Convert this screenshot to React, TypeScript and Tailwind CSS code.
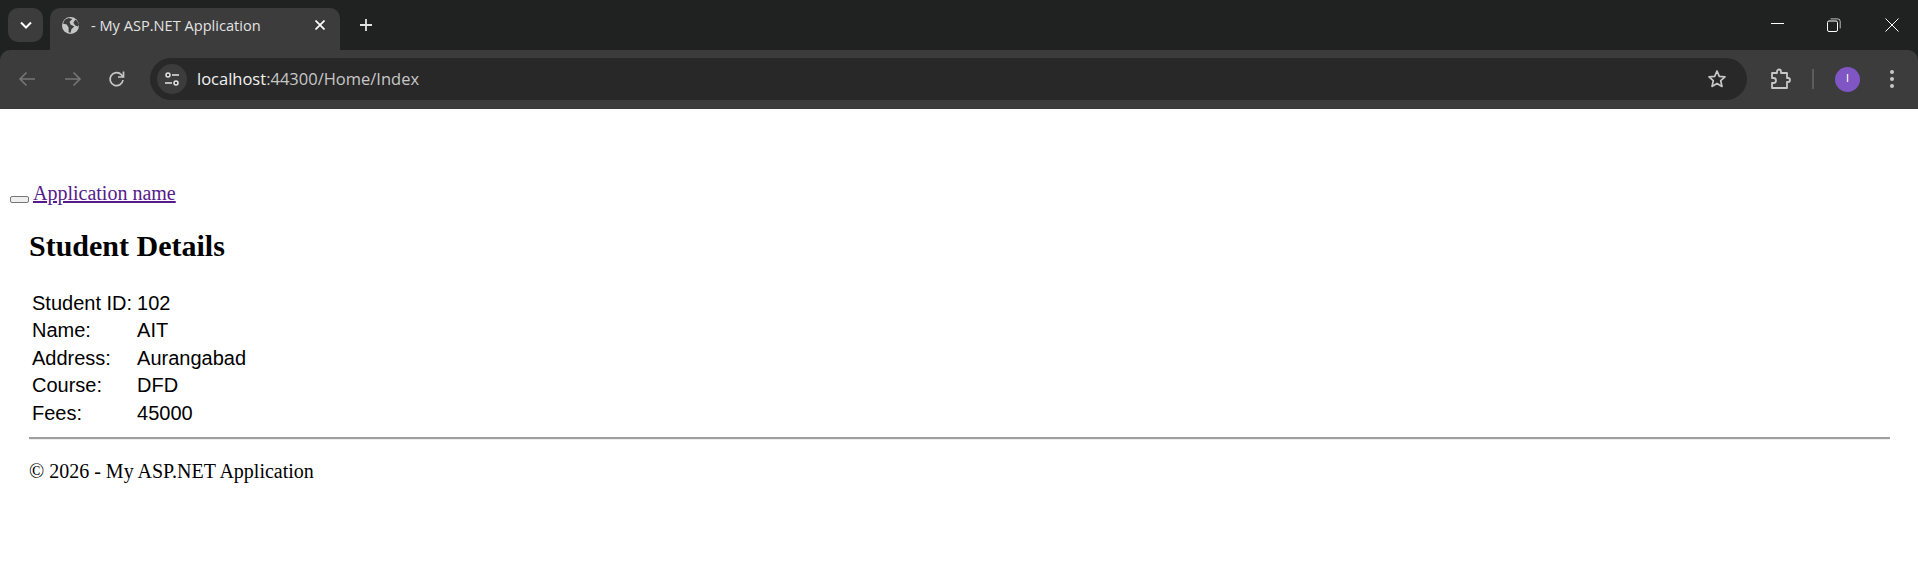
import React from "react";

const C = "#c7c7c7";

function Tabs() {
  return (
    <div className="relative flex h-[50px] bg-[#202221]">
      <div className="ml-[8px] mt-[8px] flex h-[34px] w-[35px] items-center justify-center rounded-[10px] bg-[#3c3c3c]">
        <svg width="12" height="8" viewBox="0 0 12 8" fill="none" stroke="#ffffff" strokeWidth="2"><path d="M1 1.5l5 5 5-5" /></svg>
      </div>
      <div className="ml-[7px] mt-[8px] flex h-[42px] w-[290px] items-start rounded-t-[10px] bg-[#3c3c3c] pl-[12px] pt-[9px] text-[#e3e3e3]">
        <svg width="17" height="17" viewBox="0 0 18 18">
          <circle cx="9" cy="9" r="9" fill="#c4c7c5" />
          <path d="M1 7l4 1 2 3 0 5 2 1 1-4 3-3-4-2-1-3 3-3-4-1-4 2z M14 3l-2 3 2 3 3 1 1-2-2-4z" fill="#3c3c3c" />
        </svg>
        <span className="ml-[12px] w-[224px] font-['Open_Sans',sans-serif] text-[14.6px] leading-[17px]">- My ASP.NET Application</span>
        <svg width="10" height="10" viewBox="0 0 10 10" className="mt-[3px]" stroke="#ffffff" strokeWidth="1.7"><path d="M.5.5l9 9M9.5.5l-9 9" /></svg>
      </div>
      <svg width="12" height="12" viewBox="0 0 12 12" className="ml-[20px] mt-[19px]" stroke="#e3e3e3" strokeWidth="1.8"><path d="M6 0v12M0 6h12" /></svg>
      <div className="ml-auto flex items-start">
        <div className="flex h-[50px] w-[49px] items-center justify-center">
          <div className="mb-[4px] h-[1px] w-[13px] bg-white" />
        </div>
        <div className="flex h-[50px] w-[63px] items-center justify-center">
          <svg width="14" height="14" viewBox="0 0 14 14" fill="none" stroke="#ffffff" strokeWidth="1" className="mb-[1px]">
            <rect x=".5" y="3" width="10" height="10.5" rx="1.5" />
            <path d="M3.5 .9h7a2.5 2.5 0 0 1 2.7 2.5v7" strokeOpacity="0.7" />
          </svg>
        </div>
        <div className="flex h-[50px] w-[53px] items-center justify-center">
          <svg width="14" height="14" viewBox="0 0 14 14" fill="none" stroke="#ffffff" strokeWidth="1" className="mb-[1px]"><path d="M.5.5l13 13M13.5.5l-13 13" /></svg>
        </div>
      </div>
    </div>
  );
}

function Toolbar() {
  return (
    <div className="bg-[#202221]">
      <div className="flex h-[59px] w-full items-center rounded-t-[10px] bg-[#3c3c3c] pb-[1px]">
        <svg width="18" height="18" viewBox="0 0 18 18" fill="none" stroke="#767676" strokeWidth="1.6" className="ml-[18px]"><path d="M17 9H2M8.5 2.5L2 9l6.5 6.5" /></svg>
        <svg width="18" height="18" viewBox="0 0 18 18" fill="none" stroke="#767676" strokeWidth="1.6" className="ml-[28px]"><path d="M1 9h15M9.5 2.5L16 9l-6.5 6.5" /></svg>
        <svg width="18" height="18" viewBox="0 0 18 18" fill="none" stroke={C} strokeWidth="1.7" className="ml-[26px]"><path d="M15 10a6.5 6.5 0 1 1-1.6-5.2L15.5 7" /><path d="M15.5 1.5V7H10" /></svg>
        <div className="ml-[24px] flex h-[42px] w-[1597px] items-center rounded-full bg-[#282828]">
          <div className="ml-[7px] flex h-[30px] w-[30px] items-center justify-center rounded-full bg-[#3c3c3c]">
            <svg width="16" height="16" viewBox="0 0 16 16" fill="none" stroke="#e3e3e3" strokeWidth="1.5">
              <circle cx="4" cy="4" r="2" /><path d="M8 4h7M1 12h7" /><circle cx="12" cy="12" r="2" />
            </svg>
          </div>
          <span className="ml-[10px] font-['Open_Sans',sans-serif] text-[16.5px] leading-[20px] text-[#c7c7c7]"><span className="text-[#f1f1f1]">localhost</span>:44300/Home/Index</span>
          <svg width="20" height="20" viewBox="0 0 20 20" fill="none" stroke={C} strokeWidth="1.7" className="ml-auto mr-[20px]"><path d="M10 2l2.3 5.4 5.7.5-4.3 3.8 1.3 5.7L10 14.4 5 17.4l1.3-5.7L2 7.9l5.7-.5z" strokeLinejoin="round" /></svg>
        </div>
        <svg width="22" height="22" viewBox="0 0 22 22" fill="none" stroke={C} strokeWidth="1.8" className="ml-[23px]" strokeLinejoin="round"><path d="M2 5h5V3.5a2 2 0 0 1 4 0V5h6v5h1a2 2 0 0 1 0 4h-1v6H2v-5h1.5a2.5 2.5 0 0 0 0-5H2z" /></svg>
        <div className="ml-[20px] h-[20px] w-[2px] bg-[#5c5c5c]" />
        <div className="ml-[21px] flex h-[25px] w-[25px] items-center justify-center rounded-full bg-[#8055c4] font-['Roboto',sans-serif] text-[11px] text-white">I</div>
        <svg width="6" height="20" viewBox="0 0 6 20" fill={C} className="ml-[29px]"><circle cx="3" cy="3" r="2" /><circle cx="3" cy="10" r="2" /><circle cx="3" cy="17" r="2" /></svg>
      </div>
    </div>
  );
}

const rows = [
  ["Student ID:", "102"],
  ["Name:", "AIT"],
  ["Address:", "Aurangabad"],
  ["Course:", "DFD"],
  ["Fees:", "45000"],
];

export default function App() {
  return (
    <div className="h-[567px] overflow-hidden bg-white font-['Liberation_Serif',serif] text-[20px] text-black">
      <Tabs />
      <Toolbar />
      <div className="pl-[10px] pt-[73px] leading-[23px]">
        <button className="mr-[4px] inline-block h-[7px] w-[19px] rounded-[2px] border-[1.5px] border-[#767676] bg-[#efefef] align-[-2px]" />
        <a href="#" className="text-[#551a8b] underline">Application name</a>
      </div>
      <div className="pl-[29px] pr-[28px]">
        <h2 className="mt-[24px] text-[30px] font-bold leading-[34px]">Student Details</h2>
        <div className="mt-[26.6px] grid w-max grid-cols-[auto_auto] gap-x-[5px] pl-[3px] font-['Liberation_Sans',sans-serif] leading-[27.5px]">
          {rows.map(([k, v]) => (
            <React.Fragment key={k}>
              <div>{k}</div>
              <div>{v}</div>
            </React.Fragment>
          ))}
        </div>
        <hr className="mt-[10px] border-t-[2px] border-b-[1px] border-t-[#a0a0a0] border-b-[#eeeeee]" />
        <p className="mt-[20px] leading-[23px]">© 2026 - My ASP.NET Application</p>
      </div>
    </div>
  );
}
